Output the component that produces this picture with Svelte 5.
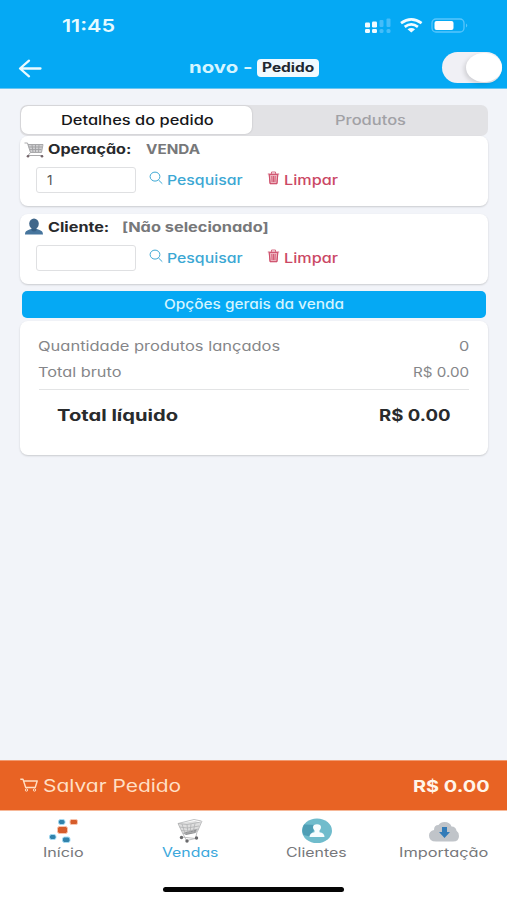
<script>
  const rows = [
    { id: 'op', label: 'Operação:', lw: 83, value: 'VENDA', vw: 54, gap: 15, code: '1' },
    { id: 'cli', label: 'Cliente:', lw: 61, value: '[Não selecionado]', vw: 147, gap: 13, code: '' }
  ];
  const nav = [
    { id: 'home', label: 'Início', w: 40 },
    { id: 'sales', label: 'Vendas', w: 57 },
    { id: 'clients', label: 'Clientes', w: 61 },
    { id: 'import', label: 'Importação', w: 89 }
  ];

  // Stretches a label horizontally so it fills the given width.
  function fit(node, width) {
    node.style.transform = `scaleX(${width / node.offsetWidth})`;
  }
</script>

{#snippet t(text, w)}
  <span class="t" style="width:{w}px"><span class="ti" use:fit={w}>{text}</span></span>
{/snippet}

<div class="screen">
  <header>
    <div class="status">
      {@render t('11:45', 53)}
      <svg width="105" height="18" viewBox="0 0 105 18">
        <g fill="#f2fbff">
          <rect x="0" y="5.500" width="5" height="5" rx="1.200" /><rect x="0" y="12" width="5" height="4" rx="1.200" />
          <rect x="7" y="4.500" width="5" height="6" rx="1.200" /><rect x="7" y="12" width="5" height="4" rx="1.200" />
        </g>
        <g fill="#45bdf9">
          <rect x="14.500" y="3" width="4" height="7" rx="1" /><rect x="14.500" y="12" width="4" height="4" rx="1.500" />
          <rect x="21.500" y="1.500" width="4" height="8.500" rx="1" /><rect x="21.500" y="12" width="4" height="4" rx="1.500" />
        </g>
        <g fill="none" stroke="#f2fbff" stroke-width="2.700">
          <path d="M36 6.200q10.300-7.600 20.600 0M39.700 9.800q6.600-5 13.200 0" />
        </g>
        <path d="M42.500 12.300q3.800-2.600 7.600 0l-3.800 3.300z" fill="#f2fbff" />
        <rect x="67" y="2" width="32" height="13" rx="4" fill="none" stroke="#58c5fb" stroke-width="1.300" />
        <rect x="69.500" y="4" width="19" height="9" rx="2" fill="#fff" />
        <path d="M101 6.500q2.600 2 0 4z" fill="#58c5fb" />
      </svg>
    </div>
    <div class="bar">
      <svg class="back" width="24" height="20" viewBox="0 0 24 20"><path d="M22.500 10.500H2.500M11 2.700L2 10.500l9 7.800" fill="none" stroke="#eafaff" stroke-width="2.300" stroke-linecap="round" stroke-linejoin="round" /></svg>
      <div class="title">{@render t('novo -', 63)}<span class="badge">{@render t('Pedido', 52)}</span></div>
      <div class="toggle"><span></span></div>
    </div>
  </header>

  <main>
    <div class="tabs">
      <div class="tab active">{@render t('Detalhes do pedido', 153)}</div>
      <div class="tab">{@render t('Produtos', 71)}</div>
    </div>

    {#each rows as r (r.id)}
      <section class="card">
        <div class="head">
          {#if r.id === 'op'}
            <svg width="20" height="17" viewBox="0 0 20 17"><path d="M3.500 3.500h15L17.500 11H6z" fill="#cfcfd1" /><path d="M.5 2h3l3 9.500h11L19 3.500H4M5 6h13M5.500 8.500h12M8 4l1 7M11.500 4v7M15 4l-.5 7M6.500 11.500L4 14.500h14.500" fill="none" stroke="#a0a0a3" stroke-width=".9" /><circle cx="4" cy="15.200" r="1.300" fill="#75656b" /><circle cx="18" cy="15.200" r="1.300" fill="#75656b" /></svg>
          {:else}
            <svg width="20" height="17" viewBox="0 0 20 17"><path d="M1 16.500C1 12.500 4 12 7.500 11h5c3.500 1 6.500 1.500 6.500 5.500z" fill="#46759d" /><path d="M7.500 9h5v3.500q-2.500 2-5 0z" fill="#365f84" /><ellipse cx="10" cy="5.800" rx="4.800" ry="5.300" fill="#41678a" /></svg>
          {/if}
          <span class="label">{@render t(r.label, r.lw)}</span>
          <span class="value" style="margin-left:{r.gap}px">{@render t(r.value, r.vw)}</span>
        </div>
        <div class="line">
          <div class="input">{r.code}</div>
          <span class="link search">
            <svg width="14" height="14" viewBox="0 0 14 14"><ellipse cx="6" cy="5.600" rx="4.900" ry="4.500" /><path d="M9.500 9l3.800 3.700" /></svg>
            {@render t('Pesquisar', 75)}
          </span>
          <span class="link clear">
            <svg width="13" height="14" viewBox="0 0 13 14"><path d="M2.200 3.500l.8 9.200h7l.8-9.200z" fill="#edb3be" /><path d="M.8 3h11.400M4.500 2.800V1h4v1.800M2.200 3.500l.8 9.200h7l.8-9.200M4.800 5l.3 6M6.500 5v6M8.200 5l-.3 6" /></svg>
            {@render t('Limpar', 54)}
          </span>
        </div>
      </section>
    {/each}

    <div class="options">{@render t('Opções gerais da venda', 180)}</div>

    <section class="card summary">
      <div class="row">{@render t('Quantidade produtos lançados', 242)}{@render t('0', 10)}</div>
      <div class="row">{@render t('Total bruto', 84)}{@render t('R$ 0.00', 56)}</div>
      <div class="total">{@render t('Total líquido', 121)}{@render t('R$ 0.00', 72)}</div>
    </section>
  </main>

  <div class="save">
    <svg width="19" height="17" viewBox="0 0 19 17"><path d="M.3 2.200h2.700l2.700 8.300h9.500l2-6.500H3.800" fill="none" stroke="#ffdfc4" stroke-width="1.400" stroke-linejoin="round" /><circle cx="6.500" cy="13" r="1.200" fill="none" stroke="#ffdfc4" /><circle cx="14.500" cy="13" r="1.200" fill="none" stroke="#ffdfc4" /></svg>
    <span class="savetxt">{@render t('Salvar Pedido', 138)}</span>
    <b>{@render t('R$ 0.00', 76)}</b>
  </div>

  <nav>
    {#each nav as n (n.id)}
      <div class="item" class:on={n.id === 'sales'}>
        <svg width="32" height="26" viewBox="0 0 32 26">
          {#if n.id === 'home'}
            <g stroke-width="1"><g fill="#3182ab" stroke="#a5dcf4"><rect x="11.500" y="1.500" width="6.500" height="5" rx="2" /><rect x="2.500" y="16.500" width="6.500" height="5" rx="2" /><rect x="15.500" y="19" width="7.500" height="5.500" rx="2" /></g><g fill="#d65c2b" stroke="#f9c5ae"><rect x="23" y="1.500" width="7.500" height="5" rx="1.500" /><rect x="10.500" y="8.500" width="10" height="7" rx="2" /></g></g>
          {:else if n.id === 'sales'}
            <path d="M4 5.500l17.500-2.500L27 5l-3.500 8.500L9 16z" fill="#dedede" /><path d="M9 15l14-4-1.500 4-9.500 2z" fill="#8e8f91" />
            <path d="M4 5.500L20 1.500l7.500 1.500M4 5.500L9 16l14.500-2.500L28 3M4 5.500l9 1L27 4M5.500 9l8 1L25 8M7 12.500l7 .5 10.500-2M8 6l3 9.500M13 6.500l1 8.500M17 6l-1 9M21 5.500l-2 9M23 14l-1.500 6.500L7.500 19M9 16l3.500 6.500 9-2" fill="none" stroke="#b0b1b3" stroke-width=".8" />
            <g fill="#6a6a6c"><circle cx="7.500" cy="19.500" r="1.700" /><circle cx="13" cy="23" r="1.700" /><circle cx="22.500" cy="20" r="1.700" /></g>
          {:else if n.id === 'clients'}
            <ellipse cx="16" cy="12.800" rx="15" ry="12.300" fill="#70bccc" /><path d="M9 18.500L2.500 17Q0 12 3 6.500L16 7z" fill="#4e9eb5" />
            <path d="M8.500 19q0-4 5-4.700v-1.800q-1.500-1.500-1.500-3.300 0-3 4-3t4 3q0 1.800-1.500 3.300v1.800q5 .7 5 4.700z" fill="#f8fdfe" />
          {:else}
            <path d="M8 23.500Q1 23.500 1 17.500 1 13 6 12 6 7 10.500 7 12.500 4 16.500 4q5.500 0 7 4.500 4.500.2 5 4.300Q31 14.500 31 18q0 5.500-6 5.500z" fill="#c0c4c9" />
            <path d="M14 9h5v5h3l-5.500 6L11 14h3z" fill="#327bb8" />
          {/if}
        </svg>
        {@render t(n.label, n.w)}
      </div>
    {/each}
    <div class="homebar"></div>
  </nav>
</div>

<style>
  .screen {
    width: 507px; height: 900px; overflow: hidden; box-sizing: border-box;
    display: flex; flex-direction: column; background: #f2f4f9;
    font-family: Inter, 'Open Sans', sans-serif; font-feature-settings: 'cv11' 1;
    font-size: 13px; color: #77787b;
  }
  .t { display: inline-block; white-space: nowrap; flex: none; text-align: left; }
  .ti { display: inline-block; transform-origin: 0 50%; }
  svg { display: block; flex: none; }

  header { height: 89px; background: #05a9f4; flex: none; border-bottom: 1px solid #69c6f2; box-sizing: border-box; }
  .status { display: flex; justify-content: space-between; align-items: center; height: 52px; padding: 0 37px 0 62px; font-size: 17.500px; font-weight: 600; color: #e6faff; }
  .status .t { margin-top: -1px; }
  .bar { display: flex; align-items: center; height: 31px; padding: 0 5px 0 18px; }
  .title { display: flex; align-items: center; margin-left: 147px; line-height: 18px; font-size: 16.500px; font-weight: 700; color: #d5f5ff; flex: 1; }
  .title > .t { margin-top: -2px; }
  .badge { width: 62px; height: 18px; border-radius: 4px; margin-left: 5px; margin-top: 1px; background: #f0faff; color: #202830; font-size: 12.500px; line-height: 18px; font-weight: 700; text-align: center; }
  .toggle { width: 60px; height: 31px; border-radius: 16px; background: #f0f0f5; display: flex; justify-content: flex-end; align-items: center; }
  .toggle span { width: 36px; height: 29px; border-radius: 50%; background: #fff; box-shadow: -2px 2px 4px #0002; }

  main { flex: 1; padding: 16px 19px 0 20px; }
  .tabs { display: flex; height: 31px; background: #e2e2e5; border-radius: 7px; box-sizing: border-box; padding: 1px; font-weight: 500; color: #a1a1a5; }
  .tab { flex: 1; display: flex; justify-content: center; align-items: center; height: 28px; padding-left: 2px; }
  .tab.active { flex: 0 0 230px; padding: 0 0 0 1px; background: #fff; color: #171719; border-radius: 7px; box-shadow: 0 0 2px #0003; }

  .card { background: #fff; border-radius: 8px; box-shadow: 0 1px 2px #0000002b; height: 70px; margin-bottom: 7.500px; box-sizing: border-box; padding: 4px 4px 0; }
  .head { display: flex; align-items: center; height: 18px; font-weight: 700; }
  .head .label { color: #28292c; margin-left: 4px; }
  .head .value { color: #77787a; }
  .head .t { display: block; }
  .line { display: flex; align-items: center; margin: 9px 0 0 12px; height: 26px; }
  .input { width: 100px; height: 26px; box-sizing: border-box; border: 1.500px solid #dfe0e2; border-radius: 3px; padding-left: 10px; line-height: 24px; font-size: 13.500px; color: #555; }
  .link { display: flex; align-items: center; font-size: 13.500px; font-weight: 500; }
  .link svg { margin: -4px 4px 0 0; fill: none; stroke: currentColor; stroke-width: 1; }
  .search { margin-left: 13px; color: #3ca8d4; }
  .clear { margin-left: 25px; color: #cb4865; }
  .clear svg { stroke-width: .8; }

  .options { height: 27px; margin: 0 2px 3px; border-radius: 5px; background: #05a9f4; color: #d3f4ff; display: flex; align-items: center; justify-content: center; font-weight: 500; }
  .options .t { margin-top: -1px; }
  .summary { height: 134px; padding: 12px 19px 0; }
  .row { display: flex; justify-content: space-between; height: 26px; line-height: 27px; color: #858689; }
  .row .t:first-child { margin-left: -1px; }
  .total { display: flex; justify-content: space-between; border-top: 1px solid #e3e4e5; margin-top: 4px; padding: 15px 18px 0; line-height: 22px; font-size: 15.500px; font-weight: 700; color: #292b2d; }

  .save { height: 51px; flex: none; box-sizing: border-box; background: #e86324; border-top: 1px solid #f19a70; border-bottom: 1px solid #f7b898; display: flex; align-items: center; padding: 0 18px 0 20px; font-size: 17px; color: #ffdfc4; }
  .savetxt { margin-left: 4px; flex: 1; }
  .save b { color: #fff5e9; font-size: 16.500px; }

  nav { height: 89px; flex: none; background: #fff; display: flex; flex-wrap: wrap; justify-content: center; align-content: flex-start; }
  .item { width: 25%; height: 76px; box-sizing: border-box; padding-top: 7px; display: flex; flex-direction: column; align-items: center; font-size: 12.500px; line-height: 17px; color: #77787b; }
  .item.on { color: #3ca8dc; }
  .homebar { width: 181px; height: 5px; border-radius: 3px; background: #050505; }
</style>
